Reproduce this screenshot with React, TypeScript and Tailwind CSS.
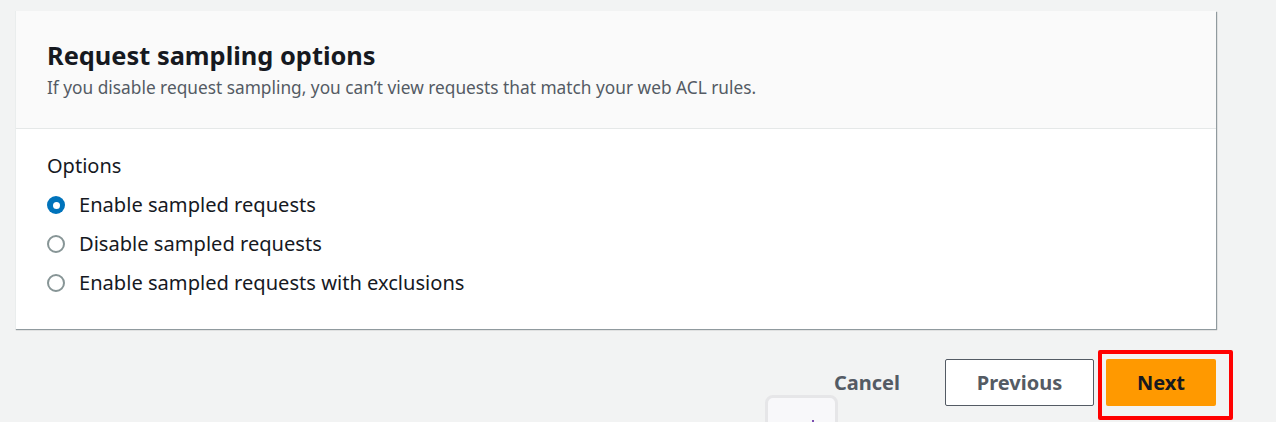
import React, { useState } from 'react';

const options = [
  'Enable sampled requests',
  'Disable sampled requests',
  'Enable sampled requests with exclusions',
];

function Radio({ checked }: { checked: boolean }) {
  return checked ? (
    <span className="flex h-[18px] w-[18px] flex-shrink-0 items-center justify-center rounded-full bg-[#0073bb]">
      <span className="h-[7px] w-[7px] rounded-full bg-white" />
    </span>
  ) : (
    <span className="h-[18px] w-[18px] flex-shrink-0 rounded-full border-2 border-[#879596] bg-white" />
  );
}

export default function App() {
  const [selected, setSelected] = useState(0);

  return (
    <div
      className="relative h-[422px] overflow-hidden bg-[#f2f3f3] pl-[15px] pt-[11px]"
      style={{ fontFamily: '"Noto Sans", "Open Sans", sans-serif' }}
    >
      {/* Card */}
      <div className="w-[1201px] border-l border-[#eaeded] bg-white shadow-[1px_1px_1px_0_rgba(0,28,36,0.3),1px_1px_1px_0_rgba(0,28,36,0.15)]">
        <div className="border-b border-[#e5e8e8] bg-[#fafafa] px-[31px] pb-[28px] pt-[27px]">
          <h2 className="text-[25.4px] font-bold leading-[34px] text-[#16191f]">
            Request sampling options
          </h2>
          <p className="mt-[4px] text-[17.3px] leading-[24px] text-[#545b64]">
            If you disable request sampling, you can’t view requests that match your web ACL rules.
          </p>
        </div>
        <div className="px-[31px] pb-[32px] pt-[23px]">
          <div className="text-[20px] leading-[28px] text-[#16191f]">Options</div>
          <div className="mt-[11px] flex flex-col gap-[11px]">
            {options.map((label, i) => (
              <label
                key={label}
                className="flex cursor-pointer items-center gap-[14px] text-[20.1px] leading-[28px] text-[#16191f]"
                onClick={() => setSelected(i)}
              >
                <Radio checked={selected === i} />
                {label}
              </label>
            ))}
          </div>
        </div>
      </div>

      {/* Actions */}
      <div className="mt-[30px] flex w-[1201px] items-center justify-end">
        <button className="mr-[45px] text-[20px] font-bold text-[#545b64]">Cancel</button>
        <button className="mr-[12px] h-[47px] w-[149px] rounded-[2px] border border-[#545b64] bg-white text-[20px] font-bold text-[#545b64]">
          Previous
        </button>
        <button className="h-[47px] w-[110px] rounded-[2px] bg-[#ff9900] text-[20px] font-bold text-[#16191f]">
          Next
        </button>
      </div>

      {/* Red annotation box around Next */}
      <div className="pointer-events-none absolute left-[1098px] top-[350px] h-[70px] w-[135px] rounded-[2px] border-4 border-[#ff0000]" />

      {/* Floating widget peeking at the bottom */}
      <div className="absolute left-[765px] top-[395px] h-[40px] w-[73px] rounded-[8px] border-[3px] border-[#e6e6e8] bg-[#f8f8fa]">
        <span className="absolute left-[44px] top-[22px] h-[4px] w-[2px] bg-[#7b4fb0]" />
      </div>
    </div>
  );
}
